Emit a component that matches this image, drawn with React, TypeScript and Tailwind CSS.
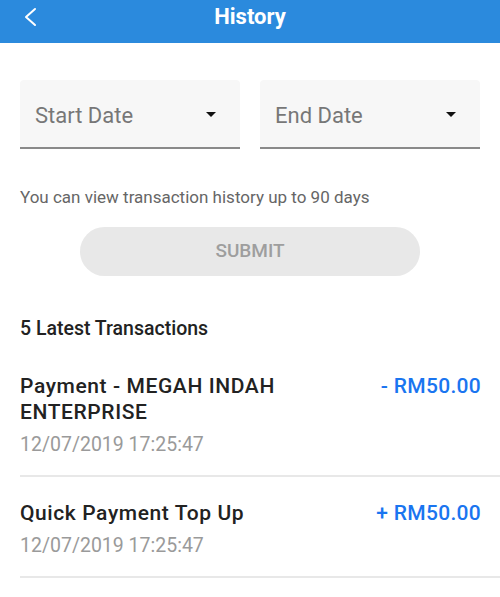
const transactions = [
	{ title: "Payment - MEGAH INDAH ENTERPRISE", amount: "- RM50.00", date: "12/07/2019 17:25:47" },
	{ title: "Quick Payment Top Up", amount: "+ RM50.00", date: "12/07/2019 17:25:47" },
];

const DateField = ({ label }: { label: string }) => (
	<div className="flex h-[69px] flex-1 items-center justify-between rounded-t-[4px] border-b-2 border-[#8a8a8a] bg-[#f7f7f7] pt-[4px] pr-[24px] pl-[15px]">
		<span className="text-[22px] text-[#777]">{label}</span>
		<svg width="10" height="5" viewBox="0 0 10 5" className="-mt-[2px]">
			<path d="M0 0h10L5 5z" fill="#111" />
		</svg>
	</div>
);

export default function App() {
	return (
		<div className="min-h-[597px] w-[500px] bg-white font-['Roboto',sans-serif]">
			{/* Top bar */}
			<div className="relative flex h-[43px] justify-center bg-[#2b8add] pt-[3px]">
				<svg className="absolute top-[7px] left-[23px]" width="14" height="20" viewBox="0 0 14 20" fill="none">
					<path d="M12 2L3 10l9 8" stroke="white" strokeWidth="2" strokeLinecap="round" strokeLinejoin="round" />
				</svg>
				<span className="text-[22px] leading-[28px] font-bold text-white">History</span>
			</div>

			<div className="flex gap-[20px] px-[20px] pt-[37px]">
				<DateField label="Start Date" />
				<DateField label="End Date" />
			</div>

			<p className="mt-[38px] px-[20px] text-[17px] leading-[20px] text-[#666]">
				You can view transaction history up to 90 days
			</p>

			<div className="mt-[20px] flex justify-center">
				<button className="h-[49px] w-[340px] rounded-full bg-[#e8e8e8] text-[19px] font-medium text-[#9e9e9e]">
					SUBMIT
				</button>
			</div>

			<h2 className="mt-[42px] px-[20px] text-[19.5px] leading-[22px] font-medium text-[#222]">
				5 Latest Transactions
			</h2>

			<div className="mt-[33px] pl-[20px]">
				{transactions.map((t) => (
					<div key={t.title + t.amount} className="flex justify-between border-b-2 border-[#e8e8e8] pr-[19px] pb-[17px] not-first:pt-[23px]">
						<div className="w-[300px]">
							<div className="text-[21px] leading-[26px] font-medium tracking-[0.6px] text-[#222]">{t.title}</div>
							<div className="mt-[7px] text-[19.5px] leading-[26px] text-[#9a9a9a]">{t.date}</div>
						</div>
						<div className="text-[21px] leading-[26px] font-medium tracking-[0.3px] text-[#1a75f0]">{t.amount}</div>
					</div>
				))}
			</div>
		</div>
	);
}
